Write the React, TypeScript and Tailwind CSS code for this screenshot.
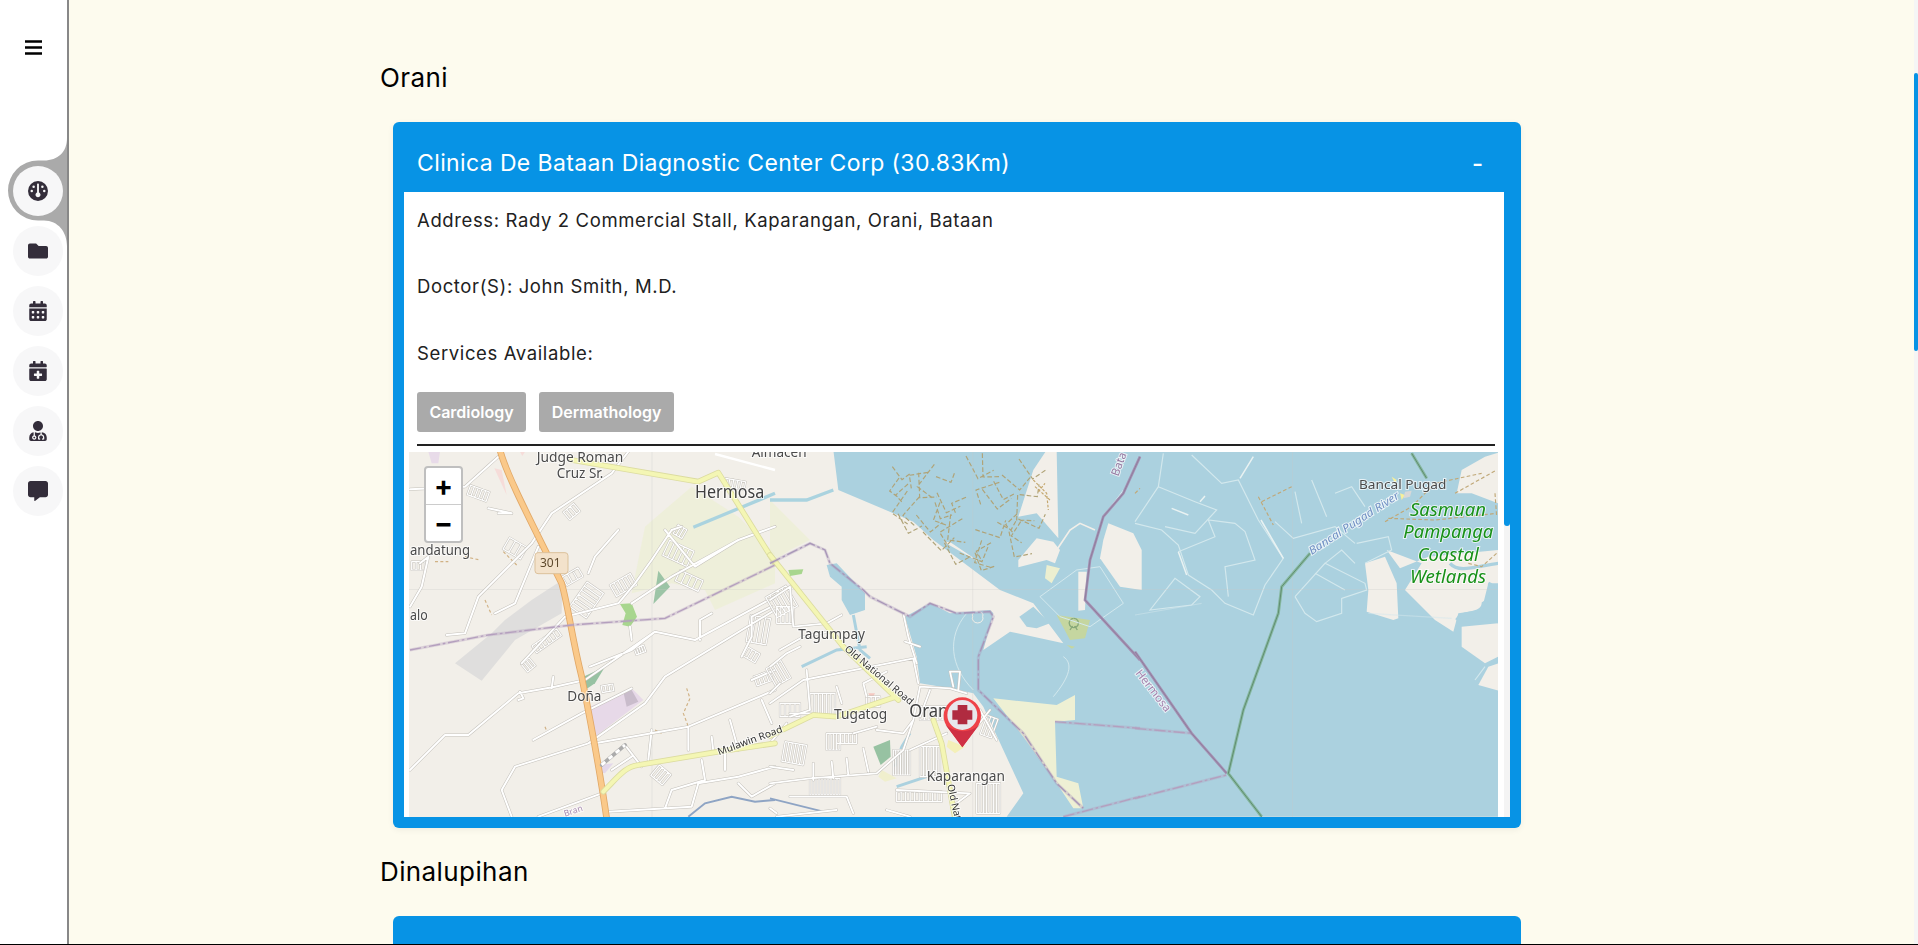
import React from "react";
import { FaFolder, FaCalendarAlt, FaCalendarPlus, FaUserMd, FaCommentAlt } from "react-icons/fa";
import { FaGauge } from "react-icons/fa6";

const FONT = "font-['Inter','Noto_Sans',sans-serif]";

type Block = [number, number, number, number, number, number];

function hatch(blocks: Block[]): string[] {
  return blocks.map(([x, y, w, h, a, n]) => {
    const r = (a * Math.PI) / 180;
    const cx = x + w / 2;
    const cy = y + h / 2;
    const p = (u: number, v: number) => {
      const dx = u - w / 2;
      const dy = v - h / 2;
      return `${(cx + dx * Math.cos(r) - dy * Math.sin(r)).toFixed(1)},${(cy + dx * Math.sin(r) + dy * Math.cos(r)).toFixed(1)}`;
    };
    let d = `M${p(0, 0)} L${p(w, 0)} M${p(0, h)} L${p(w, h)}`;
    for (let i = 0; i <= n; i++) {
      const u = (w * i) / n;
      d += ` M${p(u, 0)} L${p(u, h)}`;
    }
    return d;
  });
}

function tanDashes(): string {
  let seed = 23;
  const rnd = () => {
    seed = (seed * 1103515245 + 12345) & 0x7fffffff;
    return seed / 0x7fffffff;
  };
  let d = "";
  for (let i = 0; i < 60; i++) {
    const x = 215 + rnd() * 570;
    const y = 10 + rnd() * 330;
    if (y > 95 + (x - 205) * 0.6 || x > 780 - y * 0.1) continue;
    const a = rnd() * Math.PI;
    const l = 45 + rnd() * 40;
    const x2 = x + Math.cos(a) * l;
    const y2 = y + Math.sin(a) * l;
    const x3 = x2 + Math.sin(a) * l * 0.7;
    const y3 = y2 - Math.cos(a) * l * 0.7;
    d += `M${x.toFixed(0)},${y.toFixed(0)} L${x2.toFixed(0)},${y2.toFixed(0)} L${x3.toFixed(0)},${y3.toFixed(0)} `;
  }
  return d;
}

function Roads({ items, w = 6 }: { items: string[]; w?: number }) {
  const d = items.join(" ");
  return (
    <g fill="none" strokeLinejoin="round" strokeLinecap="round">
      <path d={d} stroke="#c4c1bb" strokeWidth={w + 3} />
      <path d={d} stroke="#ffffff" strokeWidth={w} />
    </g>
  );
}

function Boundary({ d, color = "#b49fbe" }: { d: string; color?: string }) {
  return (
    <g fill="none">
      <path d={d} stroke={color} strokeOpacity={0.35} strokeWidth={9} />
      <path d={d} stroke={color} strokeWidth={4} strokeDasharray="34 8 8 8" />
    </g>
  );
}

function Label(props: {
  x: number;
  y: number;
  s: number;
  w?: number;
  fill?: string;
  rot?: number;
  italic?: boolean;
  halo?: boolean;
  children: string;
}) {
  const { x, y, s, w, fill = "#4a4a4a", rot, italic, halo = true, children } = props;
  return (
    <text
      x={x}
      y={y}
      fontSize={s}
      fontFamily="'Noto Sans', sans-serif"
      fontStyle={italic ? "italic" : "normal"}
      fill={fill}
      textLength={w}
      lengthAdjust={w ? "spacingAndGlyphs" : undefined}
      stroke={halo ? "rgba(255,255,255,0.7)" : "none"}
      strokeWidth={halo ? 6 : 0}
      paintOrder="stroke"
      transform={rot ? `rotate(${rot} ${x} ${y})` : undefined}
    >
      {children}
    </text>
  );
}

const C1 = "translate(405 450) scale(0.33333)";
const C2 = "translate(770 450) scale(0.33333)";
const C3 = "translate(1135 450) scale(0.33333)";

const BLOCKS1: Block[] = [
  [190, 115, 60, 30, 20, 5],
  [500, 420, 90, 60, -55, 6],
  [620, 385, 70, 40, -30, 5],
  [815, 375, 75, 35, 25, 4],
  [780, 285, 80, 50, 25, 5],
  [690, 590, 30, 20, -20, 4],
  [475, 365, 55, 30, -30, 3],
  [300, 275, 60, 40, 30, 3],
  [480, 170, 40, 30, -40, 3],
  [745, 955, 45, 40, 40, 4],
  [380, 560, 90, 25, -35, 6],
  [590, 705, 35, 20, -10, 3],
  [1030, 500, 60, 80, 10, 4],
  [1050, 670, 50, 30, -20, 4],
  [20, 335, 40, 25, 0, 3],
  [960, 90, 60, 25, 10, 5],
  [355, 630, 30, 30, -40, 3],
  [810, 230, 30, 30, 30, 3],
  [1020, 600, 40, 30, 30, 3],
];

const BLOCKS2: Block[] = [
  [120, 730, 75, 65, 0, 6],
  [40, 880, 65, 60, 10, 6],
  [170, 850, 40, 50, 0, 4],
  [370, 900, 50, 75, 0, 7],
  [120, 985, 90, 50, 0, 10],
  [450, 890, 60, 90, 0, 6],
  [620, 1000, 70, 90, 0, 7],
  [380, 1025, 135, 30, 0, 10],
  [0, 420, 70, 70, -30, 5],
  [0, 640, 50, 60, -30, 4],
  [20, 470, 50, 50, 0, 4],
  [290, 740, 40, 30, 0, 3],
  [450, 770, 80, 40, 0, 6],
  [640, 800, 35, 60, 20, 3],
  [30, 760, 60, 40, 0, 4],
  [200, 850, 60, 30, 0, 5],
];

const TAN = tanDashes();

function MapDrawing() {
  return (
    <svg viewBox="409 452 1089 365" className="block w-[1089px] h-[365px] blur-[0.45px]">
      <rect x="409" y="452" width="1089" height="365" fill="#f2efe9" />
      <g transform={C1}>
        <path d="M680,430 L720,230 L860,110 L1000,200 L1110,310 L1110,400 L930,480 L900,420 L800,400 Z" fill="#ecf0d3" fillOpacity={0.7} />
        <path d="M150,640 L230,692 L330,570 L470,490 L472,390 L380,450 L300,510 L260,550 Z" fill="#dfdedd" />
        <path d="M268,55 L290,60 L305,135 Z" fill="#f6dcd9" />
        <path d="M70,5 L105,5 L100,40 L80,40 Z" fill="#e8dbe9" />
        <path d="M345,5 L360,5 L352,18 Z" fill="#f6dcd9" />
        <path d="M760,362 L795,410 L745,462 Z" fill="#9cc4a6" />
        <path d="M645,462 L680,460 L696,500 L675,530 L652,525 L662,490 Z" fill="#a8d68e" />
        <path d="M535,680 L600,650 L570,700 L540,720 Z" fill="#97c2a2" />
        <path d="M555,770 L680,715 L715,750 L570,860 Z" fill="#e7d9e8" />
        <path d="M655,725 L680,720 L700,755 L665,770 Z" fill="#c9bccb" />
        <path d="M585,945 L625,940 L600,970 L590,968 Z" fill="#e3d8ea" />
        <path d="M865,232 L1110,130" stroke="#aad3df" strokeWidth={10} fill="none" />
        <path d="M850,1100 L900,1060 L980,1040 L1050,1055 L1110,1050" stroke="#8ea4c4" strokeWidth={6} fill="none" />
        <path d="M240,450 L260,495 M295,305 L335,345 M90,335 L130,335 M180,320 L225,330 M845,715 L855,745 L835,790 L850,830 M750,840 L770,850 M420,830 L428,850" stroke="#d0b184" strokeWidth={3.5} strokeDasharray="9 7" fill="none" />
      </g>
      <g transform={C2}>
        <path d="M0,150 L120,270 L60,300 L0,340 Z" fill="#ecf0d3" fillOpacity={0.7} />
        <path d="M0,150 L110,150 L190,120" stroke="#aad3df" strokeWidth={10} fill="none" />
        <path d="M55,360 L100,358 L95,372 L60,378 Z" fill="#a8d68e" />
        <path
          d="M190,0 L2185,0 L2185,1100 L710,1100 L760,1030 L700,900 L640,770 L610,730 L540,715 L450,700 L440,620 L405,500 L480,460 L540,490 L660,480 L670,490 L640,600 L720,545 L880,580 L790,460 L690,420 L490,270 L430,215 L205,120 Z"
          fill="#abd1df"
        />
        <path d="M170,345 L200,340 L285,430 L285,480 L240,495 L215,450 L215,410 L180,380 Z" fill="#abd1df" />
        <path d="M95,650 L200,600 L290,590 M250,495 L270,600 L300,625 M380,1010 L470,980" stroke="#abd1df" strokeWidth={9} fill="none" />
        <path d="M0,1045 L160,1085" stroke="#8ea4c4" strokeWidth={5} fill="none" />
        <path d="M420,850 L395,890 L375,950" stroke="#abd1df" strokeWidth={8} fill="none" />
        <path d="M745,200 L790,60 L830,0 L860,0 L865,265 L800,190 Z" fill="#f2efe9" />
        <path d="M800,265 L850,275 L870,300 L855,340 L830,330 L745,352 L745,330 Z" fill="#f2efe9" />
        <path d="M1015,220 L1090,250 L1115,300 L1115,420 L1050,410 L990,325 L1000,270 Z" fill="#f2efe9" />
        <path d="M925,365 L950,365 L945,480 L925,482 Z" fill="#f2efe9" />
        <path d="M748,500 L790,470 L840,520 L800,535 L770,530 Z" fill="#abd1df" />
        <path d="M520,275 L660,355 L650,350 L540,276 Z" fill="#f2efe9" />
        <path d="M830,345 L870,355 L845,400 L825,385 Z" fill="#ecefd0" />
        <path d="M860,495 L960,510 L945,565 L900,570 Z" fill="#c5d6a0" />
        <path d="M890,585 L915,590 L905,596 Z" fill="#c5d6a0" />
        <path d="M912,505 a14,14 0 1 1 -1,0 M900,540 l8,-12 M922,540 l-8,-12" stroke="#87a878" strokeWidth={4} fill="none" />
        <path d="M670,745 L860,765 L915,735 L915,810 L855,815 L860,980 L925,1000 L940,1075 L910,1075 L860,1000 L760,860 Z" fill="#eef0d4" />
        <path d={TAN} stroke="#b0a377" strokeWidth={3.5} strokeDasharray="14 7" fill="none" />
        <path d="M790,90 L830,130 L835,180 M805,125 L825,100 M795,110 L840,150" stroke="#c4a76e" strokeWidth={3.5} strokeDasharray="8 5" fill="none" />
        <g stroke="#d3e8ed" strokeWidth={3} fill="none">
          <path d="M590,490 C530,560 540,650 610,720" />
          <path d="M608,500 a16,14 0 1 0 30,0 a16,12 0 1 0 -30,0" stroke="#f2efe9" />
          <path d="M860,300 L900,240 L930,220 L975,240" stroke="#f2efe9" strokeWidth={5} />
          <path d="M810,440 L920,360 L990,350 L1060,460 L960,530 L870,500 L810,440" />
          <path d="M1060,120 L1000,200 M880,620 C910,640 900,680 850,740" />
        </g>
      </g>
      <g transform={C3}>
        <path d="M690,340 L750,320 L785,400 L790,505 L775,510 L695,485 L700,420 Z" fill="#f2efe9" />
        <path d="M980,60 L1050,20 L1090,8 L1090,160 L1010,130 L965,130 Z" fill="#f2efe9" />
        <path d="M755,300 L795,355 L880,320 L1090,300 L1090,400 L1060,400 L1040,480 L970,490 L955,545 L900,510 L810,420 L860,340 Z" fill="#f2efe9" />
        <path d="M980,530 L1090,520 L1090,620 L1050,640 L980,590 Z" fill="#f2efe9" />
        <path d="M1030,705 L1060,650 L1090,640 L1090,722 Z" fill="#f2efe9" />
        <path d="M945,340 C970,370 1020,350 1090,340 M1060,400 C1085,410 1075,440 1045,460 C1040,500 980,480 965,510 M965,510 C1010,515 1040,500 1090,515" stroke="#abd1df" strokeWidth={10} fill="none" />
        <g stroke="#d3e8ed" strokeWidth={3.5} fill="none">
          <path d="M45,480 L120,385 L195,440 L170,465 L45,480 Z" />
          <path d="M0,220 L80,240 L130,285 L160,375 L230,420 L270,460 L355,495 L390,405 L445,325 L370,210 L310,90 L260,100 L170,15" />
          <path d="M130,305 L240,260 L220,210 L300,220 L330,245 L360,330 L270,350 L280,440" />
          <path d="M85,10 L70,110 L0,215 M70,110 L180,155 L245,180 L180,250 L90,230" />
          <path d="M480,440 L570,340 L690,400 L695,420 L620,445 L620,490 L545,515 L510,490 L480,440" />
          <path d="M570,340 L620,300 L660,340 M665,280 L760,260 L770,300 L690,340 M540,370 L630,420" />
          <path d="M420,215 L475,265 L600,230 L660,280 M480,125 L500,220 M530,90 L575,200 M600,130 L650,110 L690,170" />
          <path d="M0,495 L200,460 M700,490 L950,505" strokeOpacity={0.5} />
          <path d="M1020,690 L1050,650" />
        </g>
        <path d="M315,85 L355,20 M378,210 L445,325 M110,175 L160,195 M130,305 L155,375 M195,155 L210,138" stroke="#e9f2f2" strokeWidth={4.5} fill="none" />
        <g stroke="#c0a878" strokeWidth={3.5} strokeDasharray="11 7" fill="none">
          <path d="M370,140 L415,225 M380,155 L470,110" />
          <path d="M750,215 L830,170 L900,100 L1040,70 M760,205 L900,210 L1085,190 M960,130 L1085,60" />
          <path d="M1000,340 L1040,350 L1085,310 M1080,130 L1085,200 M0,130 L15,115" />
        </g>
      </g>
      <path d="M409,589.5 L1498,589.5 M652,452 L652,817 M972.7,452 L972.7,817 M1292.5,452 L1292.5,817" stroke="#c8c8c4" strokeOpacity={0.35} strokeWidth={0.8} />
      <g transform={C1}>
        <Roads items={hatch(BLOCKS1)} w={3.5} />
        <Roads
          items={[
            "M15,118 L180,110 L280,20",
            "M15,470 L50,410 L70,320 L45,340",
            "M125,555 L180,550 L220,440 L380,280 L440,190 L620,70 L670,5",
            "M270,490 L330,460 L400,290",
            "M350,640 L480,500 L640,460 L690,400 L740,330 L800,240",
            "M15,960 L120,855 L190,855 L340,730 L450,710 L540,690 L750,545 L870,570 L1110,440",
            "M320,1100 L290,1020 L330,950 L550,880 L720,760 L780,680 L1110,480",
            "M385,870 L530,790 L680,715",
            "M400,1100 L590,1030",
            "M610,1085 L860,1070 L880,1000 L1000,980 L1110,950",
            "M570,880 L850,830 L1110,720",
            "M740,840 L730,930 M850,835 L850,900 M975,810 L1000,900 M920,860 L925,905 M660,885 L710,950",
            "M555,650 L680,600 L750,545",
            "M640,240 L570,320 L550,370 M885,570 L885,510 L920,490",
            "M1100,470 L1040,500 L1040,560 L1010,620 M1110,660 L1040,690 M780,240 L870,350 L1000,270",
            "M680,570 L675,530",
            "M250,175 L320,190 L280,190",
            "M680,460 L800,380 L1000,270 L1110,230 M800,240 L830,230",
            "M445,680 L440,715 M345,725 L355,745 L340,750",
            "M1000,1000 L1040,1040 L1110,1000 M780,1075 L800,1020 L900,990",
            "M890,930 L900,990 M960,900 L960,960 M1070,750 L1100,820 M620,960 L680,920",
          ]}
        />
        <path d="M930,12 L1110,60" stroke="#fff" strokeWidth={7} fill="none" />
      </g>
      <g transform={C2}>
        <path d="M310,890 L360,870 L362,920 L332,945 Z" fill="#97c2a2" />
        <path d="M335,960 L380,985 L345,995 L325,980 Z" fill="#f0efcd" />
        <path d="M295,730 L315,730 L305,750 Z" fill="#f4c8c0" />
        <path d="M535,870 L585,890 L555,910 L530,890 Z" fill="#f4f0b8" />
        <Roads items={hatch(BLOCKS2)} w={3.5} />
        <Roads
          items={[
            "M0,450 L60,410 L70,530 L170,520 L215,495",
            "M0,760 L100,690 L430,625 L445,700",
            "M0,1000 L120,985 L320,970 L400,900 L430,810 L450,710 L540,715 L590,730",
            "M400,490 L415,560 L440,640 M405,575 L450,590",
            "M30,700 L0,730 M110,660 L120,780 L60,800 M200,710 L215,760 M290,740 L280,700 L350,665",
            "M0,950 L70,960 M130,940 L130,990 M185,935 L190,985 M230,925 L235,975 M280,895 L295,965 M320,840 L400,850 L430,810",
            "M380,1020 L600,1030 L560,1060 M60,1040 L230,1040 L250,1090 M250,850 L320,830",
            "M540,665 L570,665 L565,720 M540,665 L550,710",
            "M30,600 L100,560 L180,545 M450,800 L480,720 M620,830 L660,780",
            "M0,650 L50,610 L90,590 M0,880 L50,820 M60,790 L135,790",
            "M530,850 L420,900 M630,780 L680,870 M350,1080 L420,1100",
            "M20,1100 L200,1080 M20,1090 L0,1075",
          ]}
          w={5.5}
        />
      </g>
      <g transform={C1} fill="none" strokeLinejoin="round" strokeLinecap="round">
        <path d="M285,0 C300,60 360,180 420,300 L470,400 C490,470 500,560 530,680 C560,830 590,1000 605,1105" stroke="#e1a867" strokeWidth={20} />
        <path d="M285,0 C300,60 360,180 420,300 L470,400 C490,470 500,560 530,680 C560,830 590,1000 605,1105" stroke="#fac98a" strokeWidth={15} />
        <path d="M595,1025 C640,980 660,950 700,945 L940,905 L1110,880 M500,30 L880,95 L940,68 L1110,340" stroke="#dcdca0" strokeWidth={17} />
        <path d="M595,1025 C640,980 660,950 700,945 L940,905 L1110,880 M500,30 L880,95 L940,68 L1110,340" stroke="#f4f6b4" strokeWidth={12} />
        <path d="M590,945 L660,885" stroke="#ababab" strokeWidth={11} />
        <path d="M590,945 L660,885" stroke="#ffffff" strokeWidth={9} strokeDasharray="14 14" strokeLinecap="butt" />
      </g>
      <g transform={C2} fill="none" strokeLinejoin="round" strokeLinecap="round">
        <path d="M0,315 L220,590 L385,750 M0,858 L130,795 L200,800 L385,738 M490,810 L515,880 L555,1105" stroke="#dcdca0" strokeWidth={17} />
        <path d="M0,315 L220,590 L385,750 M0,858 L130,795 L200,800 L385,738 M490,810 L515,880 L555,1105" stroke="#f4f6b4" strokeWidth={12} />
      </g>
      <g transform={C1}>
        <Boundary d="M15,600 L250,555 L500,525 L780,505 L1110,345" />
      </g>
      <g transform={C2}>
        <Boundary d="M0,340 L120,280 L165,300 L180,340 L280,420 L300,440 L420,500 L480,460 L560,490 L660,485 L670,500 L625,620 L625,720 L760,850 L860,1000 L940,1075" color="#a896b8" />
        <Boundary d="M855,815 L1110,835 M880,1100 L1110,1040" />
        <path d="M1110,20 L1060,130 L1000,200 L960,330 L945,450 L1000,510 L1110,630" stroke="#a58fb2" strokeWidth={8} fill="none" />
        <path d="M1110,20 L1060,130 L1000,200 L960,330 L945,450 L1000,510 L1110,630" stroke="#8e7f9e" strokeWidth={3} fill="none" />
      </g>
      <g transform={C3}>
        <Boundary d="M0,835 L170,850 M0,1045 L275,975" />
        <path d="M0,605 L170,850 L275,970" stroke="#a58fb2" strokeWidth={8} fill="none" />
        <path d="M0,605 L170,850 L275,970" stroke="#8e7f9e" strokeWidth={3} fill="none" />
        <path d="M830,10 L875,85 M525,310 L440,410 L430,490 L325,780 L280,970 L380,1100" stroke="#86b8a0" strokeWidth={9} fill="none" />
        <path d="M830,10 L875,85 M525,310 L440,410 L430,490 L325,780 L280,970 L380,1100" stroke="#5f8d6f" strokeWidth={3} fill="none" />
        <path d="M770,80 L785,90 L780,100 Z M795,130 L810,135 L800,150 Z" fill="#f7f09a" />
        <path d="M810,125 L830,122 L825,140 L805,145 Z" fill="#d8d8d8" />
      </g>
      <g transform={C1}>
        <Label x={395} y={36} s={42} w={260}>Judge Roman</Label>
        <Label x={455} y={85} s={42} w={140}>Cruz Sr.</Label>
        <Label x={870} y={145} s={52} w={208} fill="#3f3f3f">Hermosa</Label>
        <Label x={15} y={315} s={42} w={180}>andatung</Label>
        <Label x={15} y={510} s={42} w={53}>alo</Label>
        <Label x={487} y={752} s={42} w={102}>Doña</Label>
        <Label x={1040} y={20} s={42} w={165}>Almacen</Label>
        <Label x={480} y={1100} s={26} rot={-18} fill="#a88bb0">Bran</Label>
        <Label x={942} y={916} s={30} w={205} rot={-20} fill="#333333">Mulawin Road</Label>
        <rect x={390} y={308} width={99} height={63} rx={9} fill="#f3e2cb" stroke="#dcc19c" strokeWidth={3} />
        <Label x={405} y={352} s={38} w={62} fill="#5f4a2d" halo={false}>301</Label>
      </g>
      <g transform={C2}>
        <Label x={85} y={567} s={42} w={200}>Tagumpay</Label>
        <Label x={222} y={600} s={30} w={258} rot={40} fill="#333333">Old National Road</Label>
        <Label x={192} y={808} s={42} w={160}>Tugatog</Label>
        <Label x={418} y={802} s={52} w={130} fill="#3f3f3f">Orani</Label>
        <Label x={470} y={992} s={42} w={235}>Kaparangan</Label>
        <Label x={532} y={1005} s={30} rot={78} fill="#333333">Old Nat</Label>
        <Label x={1045} y={80} s={34} rot={-70} fill="#9478a0">Bata</Label>
      </g>
      <g transform={C3}>
        <Label x={0} y={670} s={34} rot={52} fill="#a583ad" w={150}>Hermosa</Label>
        <Label x={672} y={118} s={40} w={262}>Bancal Pugad</Label>
        <Label x={530} y={315} s={33} w={316} rot={-33} italic fill="#7191c4">Bancal Pugad River</Label>
        <Label x={825} y={198} s={54} w={228} italic fill="#189118">Sasmuan</Label>
        <Label x={805} y={265} s={54} w={270} italic fill="#189118">Pampanga</Label>
        <Label x={848} y={332} s={54} w={183} italic fill="#189118">Coastal</Label>
        <Label x={825} y={398} s={54} w={228} italic fill="#189118">Wetlands</Label>
      </g>
      <g transform={C2}>
        <path d="M577,892 L535,835 A56,56 0 1 1 619,835 Z" fill="#ef4349" />
        <path d="M577,892 L527,825 C560,850 600,850 627,825 Z" fill="#cf3044" />
        <circle cx={577} cy={795} r={45} fill="#e8e8ec" />
        <path d="M563,765 H592 V781 H607 V809 H592 V823 H563 V809 H547 V781 H563 Z" fill="#b02b40" />
      </g>
    </svg>
  );
}

const NAV = [FaGauge, FaFolder, FaCalendarAlt, FaCalendarPlus, FaUserMd, FaCommentAlt];

function Sidebar() {
  return (
    <aside className="relative w-[69px] shrink-0 h-full bg-white border-r-2 border-[#888888]">
      <svg viewBox="0 0 67 300" className="absolute left-0 top-0 w-[67px] h-[300px]">
        <path d="M67,138 C67,152 58,160.5 44,160.5 L38,160.5 A30,30 0 0 0 38,220.5 L44,220.5 C58,220.5 67,232 67,246 Z" fill="#aaaaaa" />
      </svg>
      <div className="relative h-[165.5px] pt-[40px] pl-[25px]">
        <svg width="17" height="15" viewBox="0 0 17 15" className="block">
          <path d="M0,1.5 H17 M0,7.5 H17 M0,13.5 H17" stroke="#000000" strokeWidth="2.4" strokeLinecap="round" />
        </svg>
      </div>
      <nav className="relative flex flex-col gap-[10px] pl-[12.5px]">
        {NAV.map((Icon, i) => (
          <div key={i} className="w-[50px] h-[50px] rounded-full bg-[#f7f7f8] flex items-center justify-center">
            <Icon size={20} color="#332d3a" />
          </div>
        ))}
      </nav>
    </aside>
  );
}

function Card() {
  return (
    <section className="ml-[12px] w-[1128px] h-[706px] rounded-[6px] bg-[#0793e5] px-[11px] pb-[11px] flex flex-col shadow-[0_2px_6px_rgba(0,0,0,0.06)]">
      <header className="h-[70px] shrink-0 pl-[13px] pr-[27px] pt-[13px] flex items-center justify-between text-white">
        <h3 className="text-[23px] tracking-[0.38px] font-normal leading-none">Clinica De Bataan Diagnostic Center Corp (30.83Km)</h3>
        <span className="text-[24px] font-medium leading-none">-</span>
      </header>
      <div className="flex h-[625px] bg-white overflow-hidden">
        <div className="w-[1100px] pt-[16px] pl-[5px] pr-[6px] text-[#212121]">
          <div className="pl-[8px] text-[18.5px] tracking-[0.62px] leading-[24px]">
            <p className="mb-[42px]">Address: Rady 2 Commercial Stall, Kaparangan, Orani, Bataan</p>
            <p className="mb-[43px]">Doctor(S): John Smith, M.D.</p>
            <p className="mb-[27px]">Services Available:</p>
            <div className="flex gap-[13px] tracking-normal">
              <span className="h-[40px] w-[109px] rounded-[3px] bg-[#aaaaaa] text-white text-[16px] font-semibold flex items-center justify-center">Cardiology</span>
              <span className="h-[40px] w-[135px] rounded-[3px] bg-[#aaaaaa] text-white text-[16px] font-semibold flex items-center justify-center">Dermathology</span>
            </div>
            <div className="mt-[12px] mr-[3px] h-[2px] bg-[#222222]" />
          </div>
          <div className="relative mt-[6px] h-[365px] overflow-hidden">
            <MapDrawing />
            <div className="absolute left-[15px] top-[14px] w-[39px] h-[77px] rounded-[4px] border-2 border-[#bfbfbf] bg-white flex flex-col text-black font-bold">
              <span className="h-[37px] border-b border-[#cccccc] flex items-center justify-center text-[28px] leading-none">+</span>
              <span className="flex-1 flex items-center justify-center text-[28px] leading-none">−</span>
            </div>
          </div>
        </div>
        <div className="w-[6px] h-full bg-[#f4f4f4]">
          <div className="w-full h-[334px] bg-[#0793e5] rounded-b-[3px]" />
        </div>
      </div>
    </section>
  );
}

export default function App() {
  return (
    <div className={`${FONT} flex w-[1918px] h-[945px] overflow-hidden border-b border-black`}>
      <Sidebar />
      <main className="flex-1 h-full overflow-hidden bg-[#fdfbee] pl-[311px] pt-[59px]">
        <h2 className="h-[38px] text-[26px] leading-[38px] tracking-[0.4px] text-black mb-[25px]">Orani</h2>
        <div className="pl-[1px]">
          <Card />
        </div>
        <h2 className="h-[38px] mt-[25px] mb-[25px] text-[26px] leading-[38px] tracking-[0.4px] text-black">Dinalupihan</h2>
        <div className="pl-[1px]">
          <div className="ml-[12px] w-[1128px] h-[80px] rounded-t-[6px] bg-[#0793e5]" />
        </div>
      </main>
      <div className="w-[4px] shrink-0 h-full bg-[#f5f5f5] pt-[73px]">
        <div className="w-full h-[278px] bg-[#0793e5] rounded-[2px]" />
      </div>
    </div>
  );
}
